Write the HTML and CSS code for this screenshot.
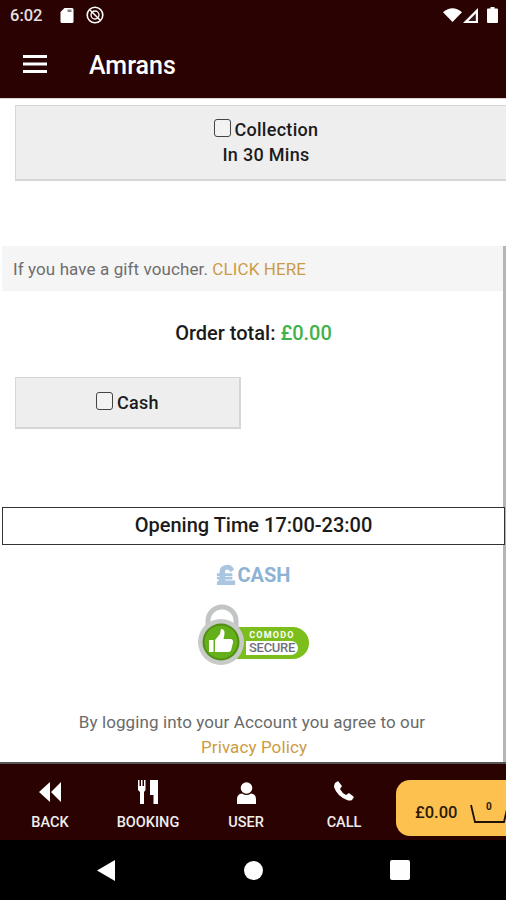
FILE: index.html
```html
<!DOCTYPE html>
<html lang="en">
  <head>
    <meta charset="utf-8">
    <meta content="width=device-width, initial-scale=1.0" name="viewport">
    <link rel="stylesheet" href="styles.css">
    <title>Amrans</title>
  </head>
  <body>
    <div class="app">
      <div class="status">
        <span class="clock">6:02</span>
        <svg class="st-sd" viewBox="0 0 13 15"><path d="M4 0h7.500A1.500 1.500 0 0 1 13 1.500v12a1.500 1.500 0 0 1-1.500 1.500h-10A1.500 1.500 0 0 1 0 13.500V4z" fill="#fff"/><path d="M7 1.500h4v2.500H7z" fill="#8a8080"/></svg>
        <svg class="st-dnd" viewBox="0 0 18 18"><circle cx="9" cy="9" r="7.800" fill="none" stroke="#fff" stroke-width="1.600"/><circle cx="9" cy="9" r="4" fill="none" stroke="#fff" stroke-width="1.300"/><path d="M4 4l10 10" stroke="#fff" stroke-width="1.500"/></svg>
        <span class="st-gap"></span>
        <svg class="st-wifi" viewBox="0 0 19 14"><path d="M0 4.200Q9.500-3.800 19 4.200L9.500 14z" fill="#fff"/></svg>
        <svg class="st-sig" viewBox="0 0 15 15"><path d="M15 0v15H0z" fill="#fff"/><path d="M12.800 5.500v7.500H5.300z" fill="#3a1616"/></svg>
        <svg class="st-bat" viewBox="0 0 11 16"><path d="M3.500 0h4v1.500H10a1 1 0 0 1 1 1V15a1 1 0 0 1-1 1H1a1 1 0 0 1-1-1V2.500a1 1 0 0 1 1-1h2.500z" fill="#fff"/></svg>
      </div>

      <header class="toolbar">
        <svg class="burger" viewBox="0 0 24 18"><path d="M0 1.500h24M0 9h24M0 16.500h24" stroke="#fff" stroke-width="2.800"/></svg>
        <h1>Amrans</h1>
      </header>

      <main class="page">
        <label class="choice choice-wide">
          <span class="choice-line"><span class="tick"></span> Collection</span>
          <span class="choice-line">In 30 Mins</span>
        </label>

        <p class="voucher">If you have a gift voucher. <a>CLICK HERE</a></p>

        <p class="total">Order total: <span>£0.00</span></p>

        <label class="choice choice-cash">
          <span class="choice-line"><span class="tick"></span> Cash</span>
        </label>

        <div class="opening">Opening Time 17:00-23:00</div>

        <div class="cash-logo">
          <svg viewBox="0 0 22 24"><path d="M20 6Q17 0 11 1 4 2 4 8v2H1v3h3v1H1v3h3l-3 3v3h20v-5H10v-1h8v-3h-8v-1h8v-3h-8V8q0-2 2-2 3 0 4 3z" fill="#a9c5e0"/></svg>
          <span>CASH</span>
        </div>

        <div class="secure">
          <svg class="lock" viewBox="0 0 66 62">
            <path d="M10 30V17a14 14 0 0 1 28 0v13" fill="none" stroke="#c2c5c5" stroke-width="5"/>
            <circle cx="23" cy="38" r="23" fill="#c8cac8"/>
            <circle cx="23" cy="38" r="18.500" fill="#4f8f12"/>
            <circle cx="23" cy="38" r="16.500" fill="#63b01a"/>
            <path d="M11 36h4.500v12H11zM17 36l5-6 1-5q4 0 3.500 5l-1 5H33q2.500 1 2 3.500l-2 8q-1 1.500-3 1.500H17z" fill="#fff"/>
          </svg>
          <div class="secure-pill">
            <span class="secure-top">COMODO</span>
            <span class="secure-low">SECURE</span>
          </div>
        </div>

        <p class="legal">By logging into your Account you agree to our<br><a>Privacy Policy</a></p>

        <div class="scrollbar"></div>
      </main>

      <nav class="tabbar">
        <a class="tab">
          <svg viewBox="0 0 22 20"><path d="M11 0v20L0 10zM22 0v20L12 10z" fill="#fff"/></svg>
          BACK
        </a>
        <a class="tab">
          <svg viewBox="0 0 20 24"><path d="M0 0h1.500v6H3V0h1.500v6H6V0h1.500v10L6 12v12H2V12L0 10zM12 0h8v24h-4.500v-9H12z" fill="#fff"/></svg>
          BOOKING
        </a>
        <a class="tab">
          <svg viewBox="0 0 19 22"><circle cx="9.500" cy="6" r="5.800" fill="#fff"/><path d="M0 22v-5q0-5 5-5.500 4.500 3 9 0 5 .5 5 5.500v5z" fill="#fff"/></svg>
          USER
        </a>
        <a class="tab">
          <svg viewBox="0 0 20 20"><path d="M1 2l3-2 4 5-2 3q2 4 6 6l3-2 5 4-2 3q-2 1-5 0Q3 15 0 6q0-2 1-4z" fill="#fff"/></svg>
          CALL
        </a>
        <div class="basket">
          <span class="basket-price">£0.00</span>
          <svg viewBox="0 0 40 19"><path d="M1 1l4 17h29l4-17" fill="none" stroke="#201008" stroke-width="1.800"/></svg>
          <span class="basket-count">0</span>
        </div>
      </nav>

      <div class="navbar">
        <svg class="nav-back" viewBox="0 0 18 21"><path d="M18 0v21L0 10.500z" fill="#fff"/></svg>
        <span class="nav-home"></span>
        <span class="nav-recent"></span>
      </div>
    </div>
  </body>
</html>
```

FILE: styles.css
```css
* { box-sizing: border-box; }

html, body {
  margin: 0;
  height: 100%;
}

body {
  font-family: Roboto, "Liberation Sans", sans-serif;
  background: #fff;
  color: #1b1b1b;
  overflow: hidden;
}

svg { display: block; }

.app {
  display: flex;
  flex-direction: column;
  height: 900px;
  overflow: hidden;
}

/* status bar */
.status {
  display: flex;
  align-items: center;
  height: 30px;
  padding: 0 8px 0 10px;
  background: #2b0202;
  color: #e6e0e0;
  flex: none;
}
.clock {
  font-size: 16.500px;
  font-weight: 500;
  width: 50px;
}
.st-sd { width: 14px; height: 15px; margin-right: 12px; }
.st-dnd { width: 18px; height: 18px; }
.st-gap { flex: 1; }
.st-wifi { width: 19px; height: 14px; margin-right: 1px; }
.st-sig { width: 15px; height: 15px; margin-right: 9px; }
.st-bat { width: 11px; height: 16px; }

/* toolbar */
.toolbar {
  display: flex;
  align-items: center;
  height: 68px;
  padding-left: 23px;
  background: #2b0202;
  flex: none;
}
.burger { width: 24px; height: 18px; }
.toolbar h1 {
  margin: 2px 0 0 42px;
  font-size: 25px;
  font-weight: 500;
  color: #fff;
}

/* content */
.page {
  position: relative;
  flex: 1;
  min-height: 0;
  padding-top: 6px;
  border-top: 1px solid #d9d9d0;
  overflow: hidden;
}

.choice {
  display: block;
  margin-left: 15px;
  text-align: center;
  font-size: 18px;
  font-weight: 500;
  letter-spacing: .3px;
  background: #eee;
  border: 2px solid #d6d6d6;
  border-width: 1px 2px 2px 1px;
}
.choice-wide {
  width: 503px;
  height: 76px;
  padding-top: 11px;
}
.choice-cash {
  width: 226px;
  height: 52px;
  margin-top: 32px;
  padding-top: 12px;
}
.choice-line {
  display: block;
  line-height: 25px;
}
.tick {
  display: inline-block;
  width: 17px;
  height: 18px;
  margin-right: -1px;
  vertical-align: -1px;
  background: #f2f2f2;
  border: 1.500px solid #444;
  border-radius: 3px;
}

.voucher {
  margin: 65px 3px 0 2px;
  height: 45px;
  padding: 0 11px;
  line-height: 47px;
  font-size: 17px;
  letter-spacing: .1px;
  color: #6e6e6e;
  background: #f5f5f5;
}
.voucher a, .legal a { color: #cc9b45; }

.total {
  margin: 30px 0 0;
  padding-left: 1px;
  text-align: center;
  font-size: 20px;
  line-height: 24px;
  font-weight: 500;
}
.total span { color: #3fb34a; }

.opening {
  position: relative;
  z-index: 1;
  margin: 78px 1px 0 2px;
  height: 38px;
  line-height: 35px;
  text-align: center;
  font-size: 20px;
  font-weight: 500;
  background: #fff;
  border: 1px solid #333;
}

.cash-logo {
  display: flex;
  justify-content: center;
  align-items: center;
  gap: 2px;
  margin: 18px 0 0;
  height: 24px;
  color: #8db2d4;
  font-size: 20px;
  font-weight: 700;
}
.cash-logo svg { width: 20px; height: 24px; }

.secure {
  display: flex;
  align-items: flex-end;
  width: 112px;
  height: 62px;
  margin: 17px 0 0 198px;
  position: relative;
}
.lock {
  position: relative;
  width: 66px;
  height: 62px;
  z-index: 1;
}
.secure-pill {
  width: 76px;
  height: 32px;
  margin: 0 0 7px -31px;
  padding: 3px 11px 0 13px;
  background: #7cbf1c;
  border-radius: 0 16px 16px 0;
  text-align: center;
}
.secure-top {
  display: block;
  color: #fff;
  font-size: 9px;
  line-height: 11px;
  font-weight: 700;
  letter-spacing: 1.200px;
  white-space: nowrap;
}
.secure-low {
  display: block;
  color: #70707a;
  background: #fff;
  border-radius: 0 7px 7px 0;
  font-size: 13px;
  line-height: 14px;
  font-weight: 500;
  letter-spacing: -.3px;
}

.legal {
  margin: 44px 0 0;
  padding-right: 2px;
  text-align: center;
  font-size: 17px;
  line-height: 25px;
  letter-spacing: .1px;
  color: #6a6a6a;
}
.legal a { padding-left: 4px; }

.scrollbar {
  position: absolute;
  top: 147px;
  right: 0;
  bottom: 0;
  width: 3px;
  background: #b5b5b5;
}

/* bottom tabs */
.tabbar {
  display: flex;
  height: 78px;
  padding-left: 1px;
  background: #2b0202;
  border-top: 2px solid #555;
  flex: none;
  overflow: hidden;
}
.tab {
  display: flex;
  flex: none;
  flex-direction: column;
  align-items: center;
  justify-content: flex-end;
  width: 98px;
  height: 68px;
  font-size: 14.500px;
  font-weight: 500;
  color: #eee;
  line-height: 18px;
}
.tab:nth-child(1) svg { width: 22px; height: 20px; margin-bottom: 12px; }
.tab:nth-child(2) svg { width: 20px; height: 24px; margin-bottom: 10px; }
.tab:nth-child(3) svg { width: 19px; height: 22px; margin-bottom: 10px; }
.tab:nth-child(4) svg { width: 20px; height: 20px; margin-bottom: 13px; }

.basket {
  position: relative;
  display: flex;
  align-items: center;
  margin: 16px 0 0 3px;
  padding: 8px 0 0 19px;
  width: 120px;
  height: 56px;
  flex: none;
  background: #fcc14f;
  border-radius: 14px 0 0 14px;
  color: #2a1a08;
}
.basket-price {
  font-size: 16.500px;
  font-weight: 500;
  margin-right: 13px;
}
.basket svg { width: 40px; height: 19px; margin-top: 2px; flex: none; }
.basket-count {
  position: absolute;
  top: 21px;
  left: 90px;
  font-size: 10px;
  font-weight: 700;
}

/* android nav */
.navbar {
  display: flex;
  align-items: center;
  height: 60px;
  padding-left: 97px;
  background: #000;
  flex: none;
}
.nav-back { width: 18px; height: 21px; }
.nav-home {
  width: 19px;
  height: 19px;
  margin-left: 129px;
  border-radius: 50%;
  background: #fff;
}
.nav-recent {
  width: 20px;
  height: 20px;
  margin-left: 127px;
  border-radius: 2px;
  background: #fff;
}
```
